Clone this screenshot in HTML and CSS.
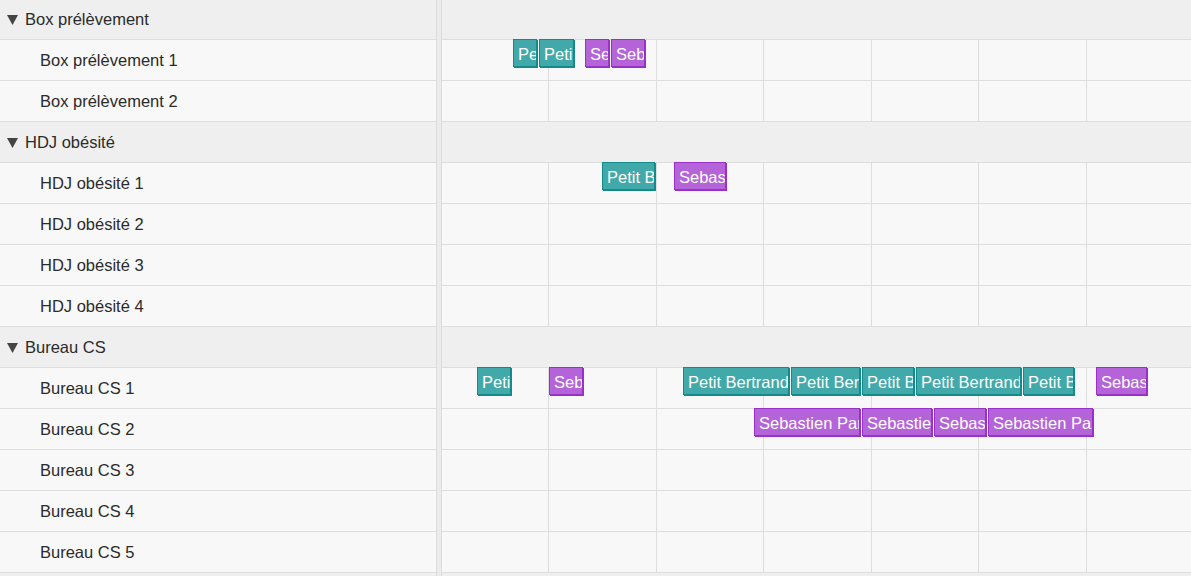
FILE: index.html
```html
<!DOCTYPE html>
<html lang="fr">
<head>
<meta charset="utf-8">
<title>Planning</title>
<link rel="stylesheet" href="styles.css">
</head>
<body>
<div class="scheduler">
  <div class="resources">
    <div class="row group"><svg class="caret" width="11" height="10" viewBox="0 0 11 10"><polygon points="0,0 11,0 5.5,10" fill="#444"/></svg><span>Box prélèvement</span></div>
    <div class="row child">Box prélèvement 1</div>
    <div class="row child">Box prélèvement 2</div>
    <div class="row group"><svg class="caret" width="11" height="10" viewBox="0 0 11 10"><polygon points="0,0 11,0 5.5,10" fill="#444"/></svg><span>HDJ obésité</span></div>
    <div class="row child">HDJ obésité 1</div>
    <div class="row child">HDJ obésité 2</div>
    <div class="row child">HDJ obésité 3</div>
    <div class="row child">HDJ obésité 4</div>
    <div class="row group"><svg class="caret" width="11" height="10" viewBox="0 0 11 10"><polygon points="0,0 11,0 5.5,10" fill="#444"/></svg><span>Bureau CS</span></div>
    <div class="row child">Bureau CS 1</div>
    <div class="row child">Bureau CS 2</div>
    <div class="row child">Bureau CS 3</div>
    <div class="row child">Bureau CS 4</div>
    <div class="row child">Bureau CS 5</div>
    <div class="row group"></div>
  </div>
  <div class="splitter"></div>
  <div class="timeline">
    <div class="row group"></div>
    <div class="row cells">
      <i></i><i></i><i></i><i></i><i></i><i></i><i></i><i></i>
      <div class="ev teal" style="left:71px;width:24px">Petit Bertrand</div>
      <div class="ev teal" style="left:97px;width:35px">Petit Bertrand</div>
      <div class="ev purple" style="left:143px;width:24px">Sebastien Paris</div>
      <div class="ev purple" style="left:169px;width:34px">Sebastien Paris</div>
    </div>
    <div class="row cells"><i></i><i></i><i></i><i></i><i></i><i></i><i></i><i></i></div>
    <div class="row group"></div>
    <div class="row cells">
      <i></i><i></i><i></i><i></i><i></i><i></i><i></i><i></i>
      <div class="ev teal" style="left:160px;width:53px">Petit Bertrand</div>
      <div class="ev purple" style="left:232px;width:52px">Sebastien Paris</div>
    </div>
    <div class="row cells"><i></i><i></i><i></i><i></i><i></i><i></i><i></i><i></i></div>
    <div class="row cells"><i></i><i></i><i></i><i></i><i></i><i></i><i></i><i></i></div>
    <div class="row cells"><i></i><i></i><i></i><i></i><i></i><i></i><i></i><i></i></div>
    <div class="row group"></div>
    <div class="row cells">
      <i></i><i></i><i></i><i></i><i></i><i></i><i></i><i></i>
      <div class="ev teal" style="left:35px;width:34px">Petit Bertrand</div>
      <div class="ev purple" style="left:107px;width:34px">Sebastien Paris</div>
      <div class="ev teal" style="left:241px;width:106px">Petit Bertrand</div>
      <div class="ev teal" style="left:349px;width:69px">Petit Bertrand</div>
      <div class="ev teal" style="left:420px;width:52px">Petit Bertrand</div>
      <div class="ev teal" style="left:474px;width:105px">Petit Bertrand</div>
      <div class="ev teal" style="left:581px;width:51px">Petit Bertrand</div>
      <div class="ev purple" style="left:654px;width:51px">Sebastien Paris</div>
    </div>
    <div class="row cells">
      <i></i><i></i><i></i><i></i><i></i><i></i><i></i><i></i>
      <div class="ev purple" style="left:312px;width:106px">Sebastien Paris</div>
      <div class="ev purple" style="left:420px;width:70px">Sebastien Paris</div>
      <div class="ev purple" style="left:492px;width:52px">Sebastien Paris</div>
      <div class="ev purple" style="left:546px;width:105px">Sebastien Paris</div>
    </div>
    <div class="row cells"><i></i><i></i><i></i><i></i><i></i><i></i><i></i><i></i></div>
    <div class="row cells"><i></i><i></i><i></i><i></i><i></i><i></i><i></i><i></i></div>
    <div class="row cells"><i></i><i></i><i></i><i></i><i></i><i></i><i></i><i></i></div>
    <div class="row group"></div>
  </div>
</div>
</body>
</html>
```

FILE: styles.css
```css
html, body {
  margin: 0;
  padding: 0;
  overflow: hidden;
  background: #f8f8f8;
}

body {
  font-family: "Liberation Sans", Arial, sans-serif;
  font-size: 16.5px;
  color: #2b2b2b;
}

.scheduler {
  display: flex;
  margin-top: -1px;
  width: 1191px;
}

.resources {
  width: 436px;
  flex: none;
  border-right: 1px solid #dddddd;
}

.splitter {
  width: 4px;
  flex: none;
  background: #ebebeb;
  border-right: 1px solid #dddddd;
}

.timeline {
  flex: 1;
  min-width: 0;
  overflow: hidden;
}

.row {
  height: 40px;
  border-bottom: 1px solid #dddddd;
  background: #f8f8f8;
  line-height: 40px;
  white-space: nowrap;
}

.row.group {
  background: #efefef;
  display: flex;
  align-items: center;
  gap: 7px;
  padding-left: 7px;
}

.timeline .row.group {
  padding-left: 0;
}

.caret {
  flex: none;
  margin-top: 1px;
}

.row.child {
  padding-left: 40px;
}

.row.cells {
  position: relative;
  display: grid;
  grid-template-columns: 107px 108px 107px 108px 107px 108px 107px 108px;
}

.row.cells i {
  display: block;
  border-right: 1px solid #dddddd;
  height: 40px;
}

.ev {
  position: absolute;
  top: -1px;
  height: 28px;
  box-sizing: border-box;
  border: 1px solid;
  padding: 1px 3px 0 4px;
  overflow: hidden;
  white-space: nowrap;
  font-size: 16.5px;
  line-height: 26px;
  color: #ffffff;
}

.ev.teal {
  background: #41a9a9;
  border-color: #138b8b;
  box-shadow: 1px 1px 0 #138b8b;
}

.ev.purple {
  background: #b464d8;
  border-color: #9b30c8;
  box-shadow: 1px 1px 0 #9b30c8;
}
```
